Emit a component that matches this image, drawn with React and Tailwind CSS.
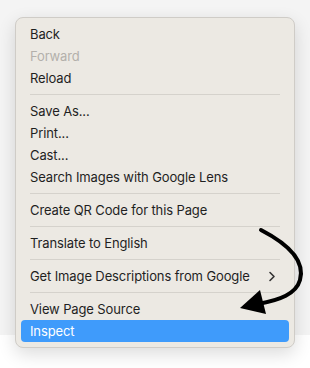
const font = { fontFamily: "Inter, 'Liberation Sans', sans-serif" };

function Item({ label, disabled, active, chevron }) {
  return (
    <div
      className={`mx-[5px] flex h-[22px] items-center justify-between rounded-[4px] pl-[9px] pr-[13px] pt-px text-[13px] tracking-[-0.12px] ${
        active ? "bg-[#3f9bfb] text-white" : disabled ? "text-[#b3b0ab]" : "text-[#1f1f1f]"
      }`}
    >
      <span>{label}</span>
      {chevron && (
        <svg width="8" height="11" viewBox="0 0 8 11" fill="none">
          <path d="M2 1.5l4 4-4 4" stroke="#333" strokeWidth="1.6" strokeLinecap="round" strokeLinejoin="round" />
        </svg>
      )}
    </div>
  );
}

function Sep() {
  return (
    <div className="flex h-[11px] items-center px-[14px]">
      <div className="h-px w-full bg-[#d5d2cc]" />
    </div>
  );
}

export default function App() {
  return (
    <div className="relative h-[368px] w-[310px] overflow-hidden bg-white" style={font}>
      <div className="absolute inset-x-0 top-0 h-[335px] bg-[#f4f4f4]" />
      <div className="relative ml-[15px] mt-[17px] w-[280px] rounded-[8px] border border-[#cfccc7] bg-[#ece9e3] py-[5px] shadow-[0_6px_18px_rgba(0,0,0,0.14)]">
        <Item label="Back" />
        <Item label="Forward" disabled />
        <Item label="Reload" />
        <Sep />
        <Item label="Save As..." />
        <Item label="Print..." />
        <Item label="Cast..." />
        <Item label="Search Images with Google Lens" />
        <Sep />
        <Item label="Create QR Code for this Page" />
        <Sep />
        <Item label="Translate to English" />
        <Sep />
        <Item label="Get Image Descriptions from Google" chevron />
        <Sep />
        <Item label="View Page Source" />
        <Item label="Inspect" active />
      </div>
      <svg className="absolute left-0 top-0" width="310" height="368" viewBox="0 0 310 368" fill="none">
        <path d="M261 230 C 290 245, 305 262, 300 280 C 296 294, 280 300, 258 304" stroke="#000" strokeWidth="4" strokeLinecap="round" />
        <path d="M240 308 L260 290 L266 314 Z" fill="#000" />
      </svg>
    </div>
  );
}
